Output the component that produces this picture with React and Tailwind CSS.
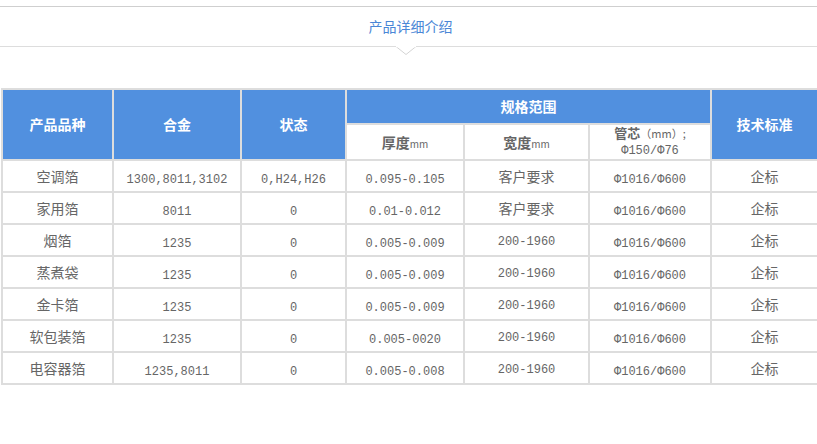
import React from 'react';

const rows = [
    ['空调箔', '1300,8011,3102', '0,H24,H26', '0.095-0.105', '客户要求'],
    ['家用箔', '8011', '0', '0.01-0.012', '客户要求'],
    ['烟箔', '1235', '0', '0.005-0.009', '200-1960'],
    ['蒸煮袋', '1235', '0', '0.005-0.009', '200-1960'],
    ['金卡箔', '1235', '0', '0.005-0.009', '200-1960'],
    ['软包装箔', '1235', '0', '0.005-0020', '200-1960'],
    ['电容器箔', '1235,8011', '0', '0.005-0.008', '200-1960'],
];

const cjk = { fontFamily: '"Noto Sans CJK SC", "Noto Sans", sans-serif' };

// 数字列用等宽字体，接近原图的宋体数字
const Num = ({ children }) => (
    <span className="font-['Liberation_Mono','Noto_Sans_CJK_SC',monospace] text-[12px]">{children}</span>
);

const App = () => {
    return (
        <div className="w-[817px] h-[444px] bg-white font-['Noto_Sans_CJK_SC','Noto_Sans',sans-serif]">
            <div className="h-[6px]" />
            <div className="border-t border-[#cfcfcf]" />

            {/* 标题 */}
            <div className="h-[39px] flex items-center justify-center">
                <span className="text-[14px] text-[#4a86d6] pl-[4px]">产品详细介绍</span>
            </div>
            <div className="relative border-t border-[#dddddd]">
                <svg className="absolute left-[396px] -top-px" width="20" height="10" viewBox="0 0 20 10">
                    <polyline points="0,0.5 10,8.5 20,0.5" fill="white" stroke="#d4d4d4" strokeWidth="1" />
                    <line x1="0" y1="0.5" x2="20" y2="0.5" stroke="white" strokeWidth="1.5" />
                </svg>
            </div>

            <div className="h-[41px]" />

            {/* 产品表格 */}
            <table className="ml-px w-[816px] table-fixed border-collapse text-center" style={cjk}>
                <colgroup>
                    <col className="w-[111px]" />
                    <col className="w-[128px]" />
                    <col className="w-[105px]" />
                    <col className="w-[118px]" />
                    <col className="w-[125px]" />
                    <col className="w-[122px]" />
                    <col className="w-[107px]" />
                </colgroup>
                <thead>
                    <tr className="h-[35px]">
                        <th rowSpan={2} className="border-2 border-[#dddddd] bg-[#5190df] text-white text-[14px] font-bold">产品品种</th>
                        <th rowSpan={2} className="border-2 border-[#dddddd] bg-[#5190df] text-white text-[14px] font-bold">合金</th>
                        <th rowSpan={2} className="border-2 border-[#dddddd] bg-[#5190df] text-white text-[14px] font-bold">状态</th>
                        <th colSpan={3} className="border-2 border-[#dddddd] bg-[#5190df] text-white text-[14px] font-bold">规格范围</th>
                        <th rowSpan={2} className="border-2 border-[#dddddd] bg-[#5190df] text-white text-[14px] font-bold">技术标准</th>
                    </tr>
                    <tr className="h-[36px]">
                        <th className="border-2 border-[#dddddd] text-[#666666] text-[14px] font-bold">
                            厚度<span className="text-[10px] font-normal">mm</span>
                        </th>
                        <th className="border-2 border-[#dddddd] text-[#666666] text-[14px] font-bold">
                            宽度<span className="text-[10px] font-normal">mm</span>
                        </th>
                        <th className="border-2 border-[#dddddd] text-[#666666] text-[13px] font-bold leading-[15px]">
                            管芯<span className="font-normal text-[11px]">（mm）;</span>
                            <br />
                            <span className="font-normal"><Num>Φ150/Φ76</Num></span>
                        </th>
                    </tr>
                </thead>
                <tbody>
                    {rows.map((r, i) => (
                        <tr key={i} className="h-[32px] text-[#666666]">
                            <td className="border-2 border-[#dddddd] text-[14px]">{r[0]}</td>
                            <td className="border-2 border-[#dddddd]"><Num>{r[1]}</Num></td>
                            <td className="border-2 border-[#dddddd]"><Num>{r[2]}</Num></td>
                            <td className="border-2 border-[#dddddd]"><Num>{r[3]}</Num></td>
                            <td className="border-2 border-[#dddddd] text-[14px]">
                                {r[4] === '客户要求' ? r[4] : <Num>{r[4]}</Num>}
                            </td>
                            <td className="border-2 border-[#dddddd]"><Num>Φ1016/Φ600</Num></td>
                            <td className="border-2 border-[#dddddd] text-[14px]">企标</td>
                        </tr>
                    ))}
                </tbody>
            </table>
        </div>
    );
};

export default App;
